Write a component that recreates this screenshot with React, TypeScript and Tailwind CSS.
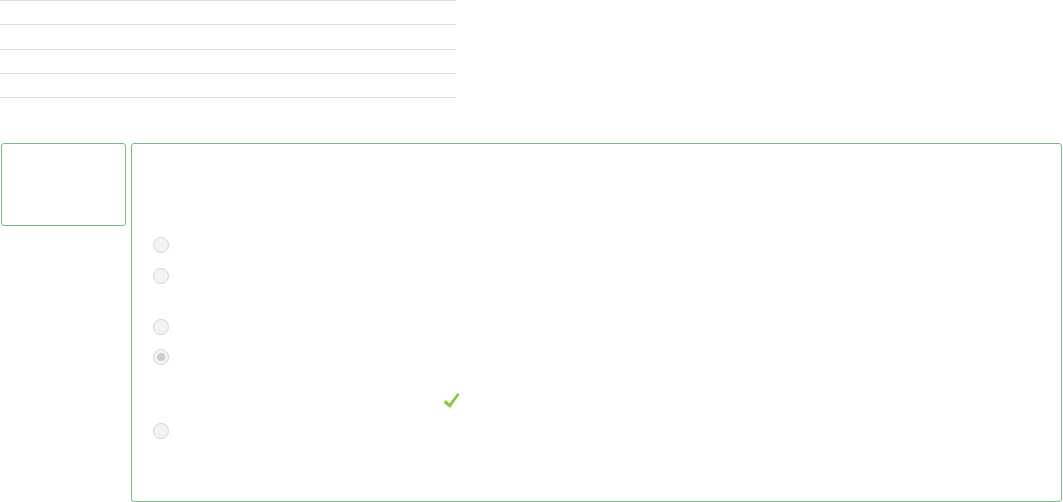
function Radio({ checked = false }: { checked?: boolean }) {
  return (
    <span className="flex h-4 w-4 items-center justify-center rounded-full border border-[#d6d6d6] bg-[#f3f3f3]">
      {checked && <span className="h-[8px] w-[8px] rounded-full bg-[#cdcdcd]" />}
    </span>
  )
}

function CheckMark() {
  return (
    <svg viewBox="0 0 17 17" className="h-[17px] w-[17px]">
      <path d="M0.5 10.5 L3 8 L6.5 11.5 L14.5 1 L16.5 2.5 L7 16 Z" fill="#8cc63f" />
    </svg>
  )
}

export default function App() {
  return (
    <div className="min-h-[502px] bg-white font-sans">
      <div className="w-[456px]">
        <div className="h-[24px] border-t border-[#dcdcdc]" />
        <div className="h-[25px] border-t border-[#dcdcdc]" />
        <div className="h-[24px] border-t border-[#dcdcdc]" />
        <div className="h-[25px] border-y border-[#dcdcdc]" />
      </div>

      <div className="mt-[45px] flex gap-[5px] pl-[1px]">
        <div className="h-[83px] w-[125px] rounded-[3px] border border-[#6fbf80]" />
        <div className="h-[359px] w-[931px] rounded-[3px] border border-[#6fbf80] pl-[21px] pt-[93px]">
          <div className="flex flex-col">
            <Radio />
            <div className="mt-[15px]"><Radio /></div>
            <div className="mt-[35px]"><Radio /></div>
            <div className="mt-[14px]"><Radio checked /></div>
            <div className="mt-[27px] ml-[290px]">
              <CheckMark />
            </div>
            <div className="mt-[14px]"><Radio /></div>
          </div>
        </div>
      </div>
    </div>
  )
}
